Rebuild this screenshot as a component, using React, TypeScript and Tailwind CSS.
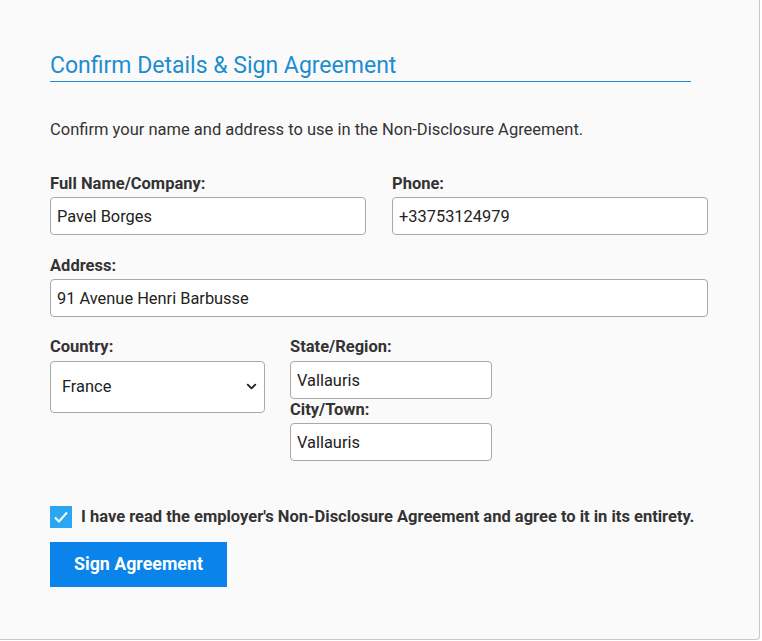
import { useState } from "react";
import { ChevronDown } from "lucide-react";

export default function App() {
  const [form, setForm] = useState({
    name: "Pavel Borges",
    phone: "+33753124979",
    address: "91 Avenue Henri Barbusse",
    country: "France",
    state: "Vallauris",
    city: "Vallauris",
  });
  const [agreed, setAgreed] = useState(true);

  const inputCls =
    "w-full h-[38px] border border-[#a9a9a9] rounded-[4px] bg-white px-[6px] text-[16.4px] text-[#222] outline-none";
  const labelCls = "block text-[16.5px] font-bold leading-[20px] mb-[3px]";

  return (
    <div className="w-[760px] h-[640px] bg-[#fbfafb] border-r border-b border-[#c9c9c9] rounded-br-[4px] px-[50px] pt-[51px] font-['Roboto',sans-serif] text-[#333]">
      {/* heading */}
      <div className="w-[641px]">
        <h2 className="text-[23px] leading-[30px] text-[#1b8dd0]">
          Confirm Details &amp; Sign Agreement
        </h2>
        <div className="h-px bg-[#1b8dd0]" />
      </div>

      <p className="mt-[37px] text-[16.5px] leading-[22px]">
        Confirm your name and address to use in the Non-Disclosure Agreement.
      </p>

      <div className="mt-[33px] grid grid-cols-[316px_316px] gap-x-[26px]">
        <div>
          <label className={labelCls}>Full Name/Company:</label>
          <input
            type="text"
            value={form.name}
            onChange={(e) => setForm({ ...form, name: e.target.value })}
            className={inputCls}
          />
        </div>
        <div>
          <label className={labelCls}>Phone:</label>
          <input
            type="text"
            value={form.phone}
            onChange={(e) => setForm({ ...form, phone: e.target.value })}
            className={inputCls}
          />
        </div>
      </div>

      <div className="mt-[21px] w-[658px]">
        <label className={labelCls}>Address:</label>
        <input
          type="text"
          value={form.address}
          onChange={(e) => setForm({ ...form, address: e.target.value })}
          className={inputCls}
        />
      </div>

      <div className="mt-[20px] flex gap-[25px]">
        <div className="w-[215px]">
          <label className="block text-[16.5px] font-bold leading-[20px] mb-[4px]">Country:</label>
          <div className="relative">
            <select
              value={form.country}
              onChange={(e) => setForm({ ...form, country: e.target.value })}
              className="w-full h-[52px] appearance-none border border-[#a9a9a9] rounded-[4px] bg-white pl-[11px] text-[16.4px] text-[#222] outline-none"
            >
              <option>France</option>
              <option>Germany</option>
              <option>Spain</option>
            </select>
            <ChevronDown
              size={15}
              strokeWidth={3}
              className="absolute right-[6px] top-[18px] text-[#222] pointer-events-none"
            />
          </div>
        </div>
        <div className="w-[202px]">
          <label className="block text-[16.5px] font-bold leading-[20px] mb-[4px]">State/Region:</label>
          <input
            type="text"
            value={form.state}
            onChange={(e) => setForm({ ...form, state: e.target.value })}
            className={inputCls}
          />
          <label className="block text-[16.5px] font-bold leading-[20px] mt-[1px] mb-[3px]">City/Town:</label>
          <input
            type="text"
            value={form.city}
            onChange={(e) => setForm({ ...form, city: e.target.value })}
            className={inputCls}
          />
        </div>
      </div>

      <label className="mt-[45px] flex items-center gap-[9px] cursor-pointer">
        <span
          onClick={() => setAgreed(!agreed)}
          className={`w-[22px] h-[22px] flex items-center justify-center ${
            agreed ? "bg-[#2ba6f3]" : "bg-white border border-[#a9a9a9]"
          }`}
        >
          {agreed && (
            <svg width="18" height="18" viewBox="0 0 18 18" fill="none">
              <path d="M3 9.5l4 4 8-9" stroke="white" strokeWidth="2" />
            </svg>
          )}
        </span>
        <span className="text-[16.5px] leading-[22px] font-bold">
          I have read the employer's Non-Disclosure Agreement and agree to it in its entirety.
        </span>
      </label>

      <button className="mt-[14px] w-[177px] h-[45px] bg-[#0a84ea] text-white text-[17.8px] font-bold">
        Sign Agreement
      </button>
    </div>
  );
}
